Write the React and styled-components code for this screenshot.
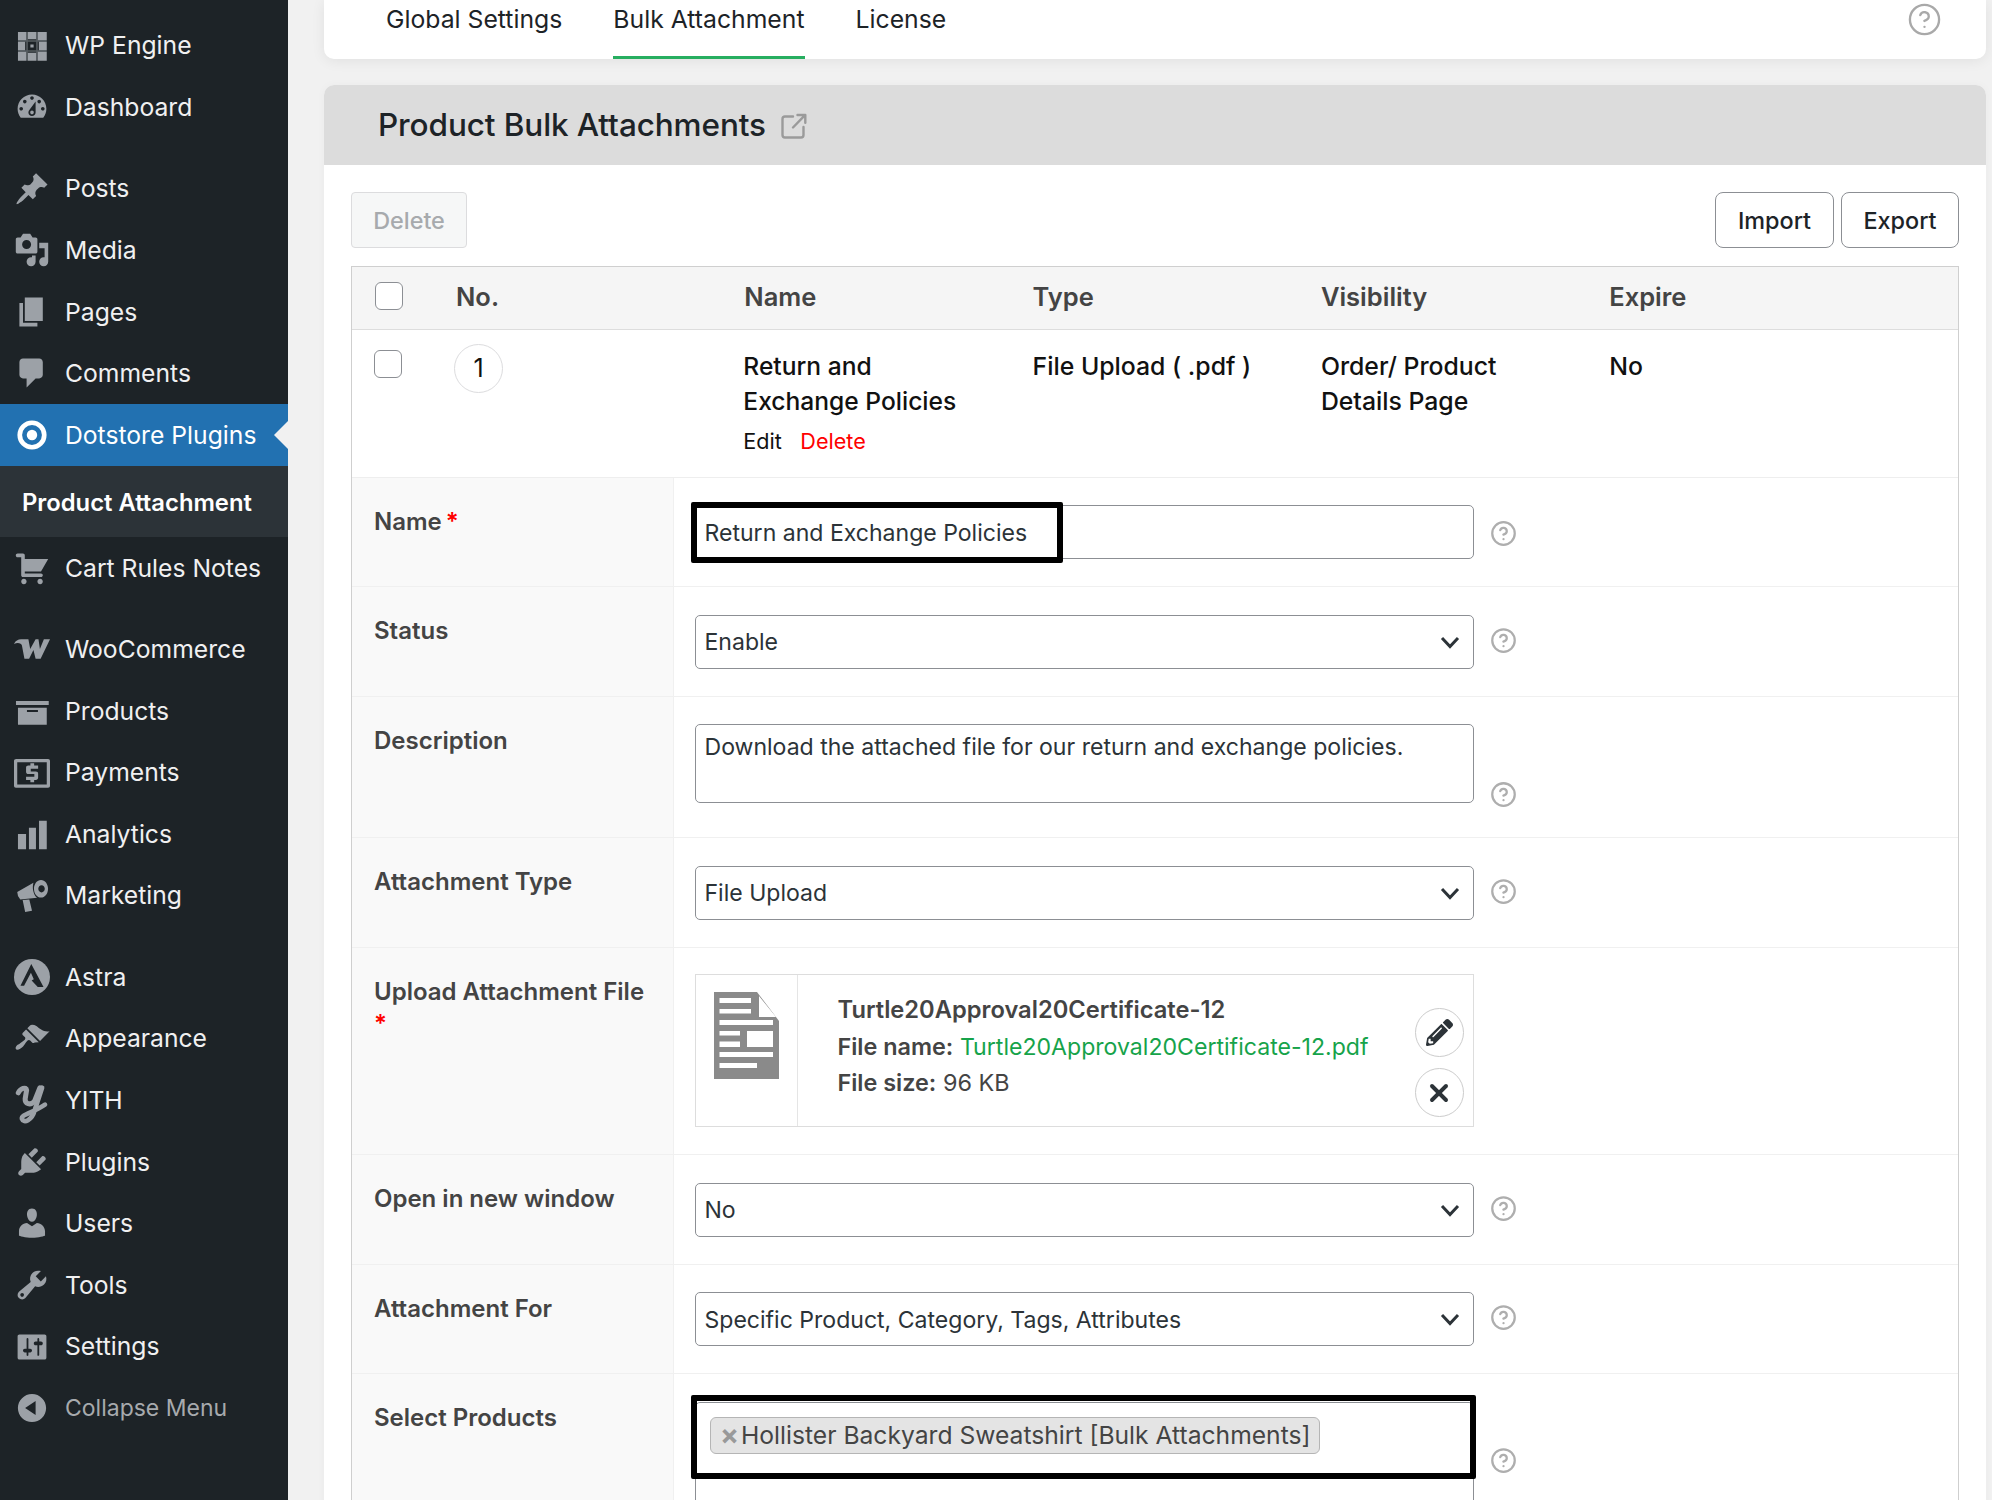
import React from 'react';
import styled, { createGlobalStyle } from 'styled-components';
import { CircleHelp, X } from 'lucide-react';
import { FaPencilAlt } from 'react-icons/fa';

const Global = createGlobalStyle`
  html, body { margin: 0; padding: 0; height: 1500px; overflow: hidden; background: #f1f1f1; }
  body { font-family: Inter, "Liberation Sans", sans-serif; color: #2c3338; }
  * { box-sizing: border-box; }
`;

const Shell = styled.div`display: flex; height: 1500px; overflow: hidden;`;
const Sidebar = styled.nav`width: 288px; flex: none; background: #1d2327; padding-top: 15px;`;
const MenuItem = styled.div`
  position: relative; height: 61.6px; display: flex; align-items: center; padding-left: 14px; gap: 15px;
  margin-bottom: ${p => (p.$gap ? '19.7px' : '0')};
  background: ${p => (p.$active ? '#2271b1' : 'transparent')};
  color: ${p => (p.$muted ? '#a7aaad' : '#f0f0f1')};
  font-size: ${p => (p.$muted ? '23px' : '24.7px')}; line-height: 1;
  ${p => p.$active && `color: #fff;`}
  svg { flex: none; overflow: visible; }
`;
const ActiveArrow = styled.span`
  position: absolute; right: 0; top: 17px; width: 0; height: 0;
  border-top: 14px solid transparent; border-bottom: 14px solid transparent; border-right: 14px solid #f1f1f1;
`;
const SubItem = styled.div`
  height: 71.5px; background: #2c3338; color: #fff; font-weight: 600; font-size: 23.8px;
  display: flex; align-items: center; padding: 2px 0 0 22px;
`;

const Main = styled.main`flex: 1; min-width: 0; padding: 0 6px 0 36px;`;
const TabPanel = styled.div`
  height: 59px; background: #fff; border-radius: 0 0 10px 10px; box-shadow: 0 2px 14px rgba(0,0,0,.07);
  display: flex; justify-content: space-between; padding: 0 44px 0 62px; margin-bottom: 26px;
`;
const Tabs = styled.div`display: flex; gap: 51px;`;
const Tab = styled.div`
  height: 59px; font-size: 24.75px; line-height: 38px; color: #1d2327;
  border-bottom: 3px solid ${p => (p.$active ? '#27ae60' : 'transparent')};
`;
const TopHelp = styled.div`padding-top: 2px; color: #a9a9a9; line-height: 0;`;
const Card = styled.section`background: #fff; border-radius: 10px 10px 0 0; box-shadow: 0 0 10px rgba(0,0,0,.03);`;
const CardHead = styled.header`
  height: 80px; background: #dcdcdc; border-radius: 10px 10px 0 0; display: flex; align-items: center;
  padding: 0 0 1.5px 54px; gap: 15px; color: #1d2327;
`;
const Title = styled.h1`margin: 0; font-size: 31.5px; font-weight: 500; letter-spacing: -.1px;`;
const HeadLink = styled.svg`width: 26px; height: 26px; margin-top: 3px; flex: none;`;
const CardBody = styled.div`padding: 27px 27px 0;`;
const Actions = styled.div`display: flex; justify-content: space-between; margin-bottom: 18px;`;
const ButtonGroup = styled.div`display: flex; gap: 7px;`;
const Btn = styled.button`
  height: 56px; padding: 0; width: ${p => p.$w}px; font: 500 23.4px Inter, sans-serif;
  border-radius: ${p => (p.$disabled ? '4px' : '8px')};
  color: ${p => (p.$disabled ? '#a7aaad' : '#1d2327')};
  background: ${p => (p.$disabled ? '#f6f7f7' : '#fff')};
  border: 1.5px solid ${p => (p.$disabled ? '#dcdcde' : '#8c8f94')};
`;
const Table = styled.div`border: 1.5px solid #cfcfcf; border-bottom: 0; width: 1608px;`;
const HeadRow = styled.div`
  display: grid; grid-template-columns: 104px repeat(5, 288.3px); height: 63px; padding-bottom: 4px; align-items: center;
  background: #f5f5f5; border-bottom: 1.5px solid #ddd; font-weight: 600; font-size: 25.5px; color: #444;
`;
const DataRow = styled.div`
  display: grid; grid-template-columns: 104px repeat(5, 288.3px); height: 147.5px; padding-top: 19px;
  border-bottom: 1.5px solid #eee; align-items: start; font-size: 24.8px; line-height: 35px; color: #111; font-weight: 500;
`;
const CheckCell = styled.div`padding-left: ${p => p.$pad}px;`;
const Check = styled.span`
  display: block; width: 28px; height: 28px; border: 1.5px solid #8c8f94; border-radius: 6px; background: #fff;
  margin-top: ${p => p.$top || 0}px;
`;
const NumberBadge = styled.div`
  width: 49px; height: 49px; border-radius: 50%; border: 1.5px solid #dcdcde; display: flex; align-items: center;
  justify-content: center; margin: -5px 0 0 -2px; font-weight: 400; font-size: 25px; color: #111;
`;
const NameCell = styled.div`margin-left: -1px; font-size: 24.6px;`;
const RowActions = styled.div`display: flex; gap: 18.5px; margin-top: 6px; font-size: 21.6px; font-weight: 400; line-height: 32px;`;
const Danger = styled.span`color: #f00;`;

const FormRow = styled.div`display: grid; grid-template-columns: 321.5px 1fr; border-bottom: 1.5px solid #f0f0f0;`;
const LabelCell = styled.div`
  background: #f9f9f9; border-right: 1.5px solid #f0f0f0; padding: 27px 22px; font-weight: 600; font-size: 24px;
  line-height: 33px; color: #444;
`;
const Req = styled.span`color: #f00; display: ${p => (p.$block ? 'block' : 'inline')}; margin-left: ${p => (p.$block ? 0 : '4px')}; line-height: ${p => (p.$block ? '32px' : 'inherit')};`;
const FieldCell = styled.div`display: flex; padding: 27.5px 0 ${p => p.$pb || 27}px 21px; gap: 16px;`;
const Field = styled.div`
  position: relative; width: 779px; height: ${p => p.$h || 54}px; flex: none; background: #fff;
  border: 1.5px solid #8c8f94; border-radius: 5px; padding: ${p => (p.$multi ? '5px 9px' : '1px 9px 0')};
  display: flex; align-items: ${p => (p.$multi ? 'flex-start' : 'center')}; justify-content: space-between;
  font-size: 23.05px; line-height: 34px; color: #2c3338;
`;
const Highlight = styled.span`
  position: absolute; left: ${p => p.$l}px; top: ${p => p.$t}px; width: ${p => p.$w}px; height: ${p => p.$h}px;
  border: 6px solid #000; border-radius: 2px; pointer-events: none;
`;
const HelpMark = styled.span`
  color: #aeaeae; line-height: 0; align-self: ${p => p.$align || 'center'};
  margin-top: ${p => p.$mt || 0}px; margin-bottom: ${p => p.$mb || 0}px;
`;
const Chevron = styled.svg`width: 20px; height: 13px; margin-right: 4px; flex: none;`;
const Upload = styled.div`
  width: 779px; height: 153px; margin-top: -1px; border: 1.5px solid #ddd; display: grid; grid-template-columns: 102px 1fr 58px; flex: none;
`;
const ThumbCell = styled.div`border-right: 1.5px solid #e5e5e5; padding: 17px 0 0 18px;`;
const FileInfo = styled.div`padding: 17px 0 0 40px; font-size: 23.4px; line-height: 36.5px; color: #444;`;
const FileTitle = styled.div`font-weight: 600; font-size: 23.7px;`;
const FileLine = styled.div`strong { font-weight: 600; }`;
const FileLink = styled.span`color: #16a34a; font-size: 23.1px;`;
const FileBtns = styled.div`display: flex; flex-direction: column; gap: 11px; padding-top: 33px; align-items: flex-start;`;
const RoundBtn = styled.div`
  width: 49px; height: 49px; border-radius: 50%; border: 1.5px solid #ccc; background: #fff; color: #2c3338;
  display: flex; align-items: center; justify-content: center;
`;
const Tag = styled.div`
  display: flex; align-items: center; height: 37px; width: 610px; margin: 9px 0 0 5.5px; padding-left: 9px; gap: 2px;
  background: #e4e4e4; border: 1.5px solid #b5b5b5; border-radius: 6px; font-size: 24.65px; color: #444; white-space: nowrap;
`;
const TagX = styled.span`font-weight: 700; color: #999; font-size: 28px; line-height: 1;`;

const Ico = ({ children, fill = '#9ca1a7' }) => (
  <svg width="36" height="36" viewBox="0 0 20 20" fill={fill} aria-hidden="true">{children}</svg>
);

const icons = {
  engine: (
    <Ico>
      <path d="M2.2 2.2h4.6v4.6H2.2zM7.7 2.2h4.6v4H7.7zM13.2 2.2h5v4.6h-5zM2.2 7.7h4v4.6h-4zM13.8 7.7h4.4v4.6h-4.4zM2.2 13.2h4.6v5H2.2zM7.7 13.8h4.6v4.4H7.7zM13.2 13.2h5v5h-5zM9.1 9.1h1.8v1.8H9.1z" />
      <path d="M6.8 2.2h.9v16h-.9zM12.3 2.2h.9v16h-.9zM2.2 6.8h16v.9h-16zM2.2 12.3h16v.9h-16z" opacity=".45" />
    </Ico>
  ),
  dashboard: <Ico><path d="M3.76 16h12.48c1.1-1.37 1.76-3.11 1.76-5 0-4.42-3.58-8-8-8s-8 3.58-8 8c0 1.89.66 3.63 1.76 5zM10 4c.55 0 1 .45 1 1s-.45 1-1 1-1-.45-1-1 .45-1 1-1zM6 6c.55 0 1 .45 1 1s-.45 1-1 1-1-.45-1-1 .45-1 1-1zm8 0c.55 0 1 .45 1 1s-.45 1-1 1-1-.45-1-1 .45-1 1-1zm-5.37 5.55L12 7v6c0 1.1-.9 2-2 2s-2-.9-2-2c0-.57.24-1.08.63-1.45zM4 10c.55 0 1 .45 1 1s-.45 1-1 1-1-.45-1-1 .45-1 1-1zm12 0c.55 0 1 .45 1 1s-.45 1-1 1-1-.45-1-1 .45-1 1-1zm-5 3c0-.55-.45-1-1-1s-1 .45-1 1 .45 1 1 1 1-.45 1-1z" fillRule="evenodd" /></Ico>,
  posts: <Ico><path d="M10.44 3.02l1.82-1.82 6.36 6.35-1.83 1.82c-1.05-.68-2.48-.57-3.41.36l-.75.75c-.92.93-1.04 2.35-.35 3.41l-1.83 1.82-2.41-2.41-2.8 2.79c-.42.42-3.38 2.71-3.8 2.29s1.86-3.39 2.28-3.81l2.79-2.79L4.1 9.36l1.83-1.82c1.05.69 2.48.57 3.4-.36l.75-.75c.93-.92 1.05-2.35.36-3.41z" /></Ico>,
  media: <Ico><path d="M13 11V4c0-.55-.45-1-1-1h-1.67L9 1H5L3.67 3H2c-.55 0-1 .45-1 1v7c0 .55.45 1 1 1h10c.55 0 1-.45 1-1zM7 4.5c1.38 0 2.5 1.12 2.5 2.5S8.38 9.5 7 9.5 4.5 8.38 4.5 7 5.62 4.5 7 4.5zM14 6h5v10.5c0 1.38-1.12 2.5-2.5 2.5S14 17.88 14 16.5s1.12-2.5 2.5-2.5c.17 0 .34.02.5.05V9h-3V6zm-4 8.05V13h2v3.5c0 1.38-1.12 2.5-2.5 2.5S7 17.88 7 16.5 8.12 14 9.5 14c.17 0 .34.02.5.05z" /></Ico>,
  pages: <Ico><path d="M6 15V2h10v13H6zm-1 1h8v2H3V5h2v11z" /></Ico>,
  comments: <Ico><path d="M5 2h9c1.1 0 2 .9 2 2v7c0 1.1-.9 2-2 2h-2l-5 5v-5H5c-1.1 0-2-.9-2-2V4c0-1.1.9-2 2-2z" /></Ico>,
  dotstore: (
    <Ico fill="#fff">
      <circle cx="10" cy="10" r="6.8" fill="none" stroke="#fff" strokeWidth="2.6" />
      <circle cx="10" cy="10" r="2.9" />
    </Ico>
  ),
  cart: <Ico><path d="M6 13h9c.55 0 1 .45 1 1s-.45 1-1 1H5c-.55 0-1-.45-1-1V4H2c-.55 0-1-.45-1-1s.45-1 1-1h3c.55 0 1 .45 1 1v2h13l-4 7H6v1zm-.5 3c.83 0 1.5.67 1.5 1.5S6.33 19 5.5 19 4 18.33 4 17.5 4.67 16 5.5 16zm9 0c.83 0 1.5.67 1.5 1.5s-.67 1.5-1.5 1.5-1.5-.67-1.5-1.5.67-1.5 1.5-1.5z" /></Ico>,
  woo: <Ico><path d="M0 7.2C.8 5.4 2.2 4.6 4 4.6h4l1 5.4 3-5.4h1.600l.8 5.400 2.200-5.400H20l-5.200 10.800H12l-1.200-4.800-2.400 4.800H5.800L4.400 8C4.200 6.800 2 6.200 0 7.200z" /></Ico>,
  products: <Ico><path d="M1.1 4.4h18.2v2.3H1.1zM2.2 8.2h16v9.4h-16zM7.2 9.4v1.1h6.1V9.4z" fillRule="evenodd" /></Ico>,
  payments: (
    <Ico>
      <path d="M1.3 2.2h17.6c.7 0 1.1.4 1.1 1.1v13.8c0 .7-.4 1.1-1.1 1.1H1.1C.4 18.2 0 17.8 0 17.1V3.3c0-.7.4-1.1 1.3-1.1zM1.8 4v12.4h16.4V4z" fillRule="evenodd" />
      <path d="M13.4 7.6H9.3v1.5h2.8c.9 0 1.3.5 1.3 1.2v2.4c0 .7-.5 1.2-1.3 1.2h-.9v1.2H9.1v-1.2H6.7v-1.8h4.6v-1.5H8c-.8 0-1.3-.5-1.3-1.2V7c0-.7.5-1.2 1.3-1.2h1.1V4.6h2.1v1.2h2.2z" />
    </Ico>
  ),
  analytics: <Ico><path d="M2.2 10h4.5v8.5H2.2zM8.3 6.5h3.9v12H8.3zM13.9 2.6h4.3v15.9h-4.3z" /></Ico>,
  marketing: (
    <Ico>
      <path d="M1.8 7.8 L10.8 2.6 C10 5.4 10.6 9 12.8 11 L3.5 12 Q1.8 10.2 1.8 7.8Z M4.8 12.2 L8.5 11.9 L10 18.2 L6.2 18.9Z" />
      <path d="M15 1.1c2.2 0 3.9 2.2 3.9 4.9s-1.7 4.9-3.9 4.9-3.9-2.2-3.9-4.9 1.7-4.9 3.9-4.9zm.3 2.9c-1 0-1.8.9-1.8 2s.8 2 1.8 2 1.8-.9 1.8-2-.8-2-1.8-2z" fillRule="evenodd" />
    </Ico>
  ),
  astra: (
    <Ico>
      <circle cx="10" cy="10" r="10" />
      <path d="M3.6 14.8 L9.6 2.8 L16.4 15.6 L13.2 15.6 L9.8 12 L11 11.2 L9.4 7.6 L5.6 14.8Z" fill="#1d2327" />
    </Ico>
  ),
  appearance: <Ico><path d="M14.48 11.06L7.41 3.99l1.5-1.5c.5-.56 2.3-.47 3.51.32 1.21.8 1.43 1.28 2.91 2.1 1.18.64 2.45 1.26 4.45.85zm-.71.71L6.7 4.7 4.93 6.47c-.39.39-.39 1.02 0 1.41l1.06 1.06c.39.39.39 1.03 0 1.42-.6.6-1.43 1.11-2.21 1.69-.35.26-.7.53-1.01.84C1.43 13.23.4 14.91 1.2 15.7c.79.8 2.48-.23 3.83-1.58.31-.31.58-.66.85-1.02.57-.78 1.08-1.61 1.69-2.21.39-.39 1.02-.39 1.41 0l1.06 1.06c.39.39 1.02.39 1.41 0z" /></Ico>,
  yith: (
    <Ico fill="none">
      <path d="M2.4 6C3.5 3.6 6.8 2.4 7 4.6L6.2 9.4C6 12 9 13.4 11.4 10.6L14.4 3.2" stroke="#9ca1a7" strokeWidth="2.8" strokeLinecap="round" />
      <path d="M15.6 3.2L11.4 16C10 21 5.4 23.4 4.4 20.4C4 18 11 17 17.2 12.6" stroke="#9ca1a7" strokeWidth="2.6" strokeLinecap="round" />
    </Ico>
  ),
  plugins: <Ico><path d="M13.11 4.36L9.87 7.6 8 5.73l3.24-3.24c.35-.34 1.05-.2 1.56.32.52.51.66 1.21.31 1.55zm-8 1.77l.91-1.12 9.01 9.01-1.19.84c-.71.71-2.63 1.16-3.82 1.16H6.14L4.9 17.26c-.59.59-1.54.59-2.12 0-.59-.58-.59-1.53 0-2.12l1.24-1.24v-3.88c0-1.13.4-3.19 1.09-3.89zm7.26 3.97l3.24-3.24c.34-.35 1.04-.21 1.55.31.52.51.66 1.21.31 1.55l-3.24 3.25z" /></Ico>,
  users: <Ico><path d="M10 9.25c-2.27 0-2.73-3.44-2.73-3.44C7 4.02 7.82 2 9.97 2c2.16 0 2.98 2.02 2.71 3.81 0 0-.41 3.44-2.68 3.44zm0 2.57L12.72 10c2.39 0 4.52 2.33 4.52 4.53v2.49s-3.65 1.13-7.24 1.13c-3.65 0-7.24-1.13-7.24-1.13v-2.49c0-2.25 1.94-4.48 4.47-4.48z" /></Ico>,
  tools: <Ico><path d="M16.68 9.77c-1.34 1.34-3.3 1.67-4.95.99l-5.41 6.52c-.99.99-2.59.99-3.58 0s-.99-2.59 0-3.57l6.52-5.42c-.68-1.65-.35-3.61.99-4.95 1.28-1.28 3.12-1.62 4.72-1.06l-2.89 2.89 2.82 2.82 2.86-2.87c.53 1.58.18 3.39-1.08 4.65zM3.81 16.21c.4.39 1.04.39 1.43 0 .4-.4.4-1.04 0-1.43-.39-.4-1.03-.4-1.43 0-.39.39-.39 1.03 0 1.43z" /></Ico>,
  settings: <Ico><path d="M18 16V4c0-.55-.45-1-1-1H3c-.55 0-1 .45-1 1v12c0 .55.45 1 1 1h14c.55 0 1-.45 1-1zM8 11h1c.55 0 1 .45 1 1s-.45 1-1 1H8v1.5c0 .28-.22.5-.5.5s-.5-.22-.5-.5V13H6c-.55 0-1-.45-1-1s.45-1 1-1h1V5.5c0-.28.22-.5.5-.5s.5.22.5.5V11zm5-2h-1c-.55 0-1-.45-1-1s.45-1 1-1h1V5.5c0-.28.22-.5.5-.5s.5.22.5.5V7h1c.55 0 1 .45 1 1s-.45 1-1 1h-1v5.5c0 .28-.22.5-.5.5s-.5-.22-.5-.5V9z" /></Ico>,
  collapse: <Ico><path d="M10 2.16c4.33 0 7.84 3.51 7.84 7.84s-3.51 7.84-7.84 7.84S2.16 14.33 2.16 10 5.71 2.16 10 2.16zm2 11.72V6.12L6.18 9.97z" /></Ico>,
};

const topMenu = [
  ['engine', 'WP Engine'], ['dashboard', 'Dashboard', true],
  ['posts', 'Posts'], ['media', 'Media'], ['pages', 'Pages'], ['comments', 'Comments'],
];
const lowerMenu = [
  ['cart', 'Cart Rules Notes', true],
  ['woo', 'WooCommerce'], ['products', 'Products'], ['payments', 'Payments'], ['analytics', 'Analytics'], ['marketing', 'Marketing', true],
  ['astra', 'Astra'], ['appearance', 'Appearance'], ['yith', 'YITH'], ['plugins', 'Plugins'], ['users', 'Users'], ['tools', 'Tools'], ['settings', 'Settings'],
];

const Help = (props) => (
  <HelpMark {...props}><CircleHelp size={27} strokeWidth={2} /></HelpMark>
);
const ChevronDown = () => (
  <Chevron viewBox="0 0 20 13" fill="none"><path d="M2 2l8 8.5L18 2" stroke="#2c3338" strokeWidth="3" /></Chevron>
);
const SelectField = ({ value }) => (
  <FieldCell><Field>{value}<ChevronDown /></Field><Help $mb={3} /></FieldCell>
);

const PdfThumb = () => (
  <svg width="65" height="87" viewBox="0 0 65 87" aria-hidden="true">
    <path d="M0 0h43l22 29v58H0z" fill="#8a8a8a" />
    <path d="M45 4l17 21H45zM5.5 6H37v5H5.5zM5.5 17H37v4.5H5.5zM5.5 28H59v5H5.5zM5.5 39H26v4.5H5.5zM33 39h26v16H33zM5.5 49.5H26V55H5.5zM5.5 60H59v5H5.5zM5.5 71H43v5H5.5z" fill="#fff" />
  </svg>
);

export default function App() {
  return (
    <Shell>
      <Global />
      <Sidebar>
        {topMenu.map(([k, label, gap]) => (
          <MenuItem key={k} $gap={gap}>{icons[k]}<span>{label}</span></MenuItem>
        ))}
        <MenuItem $active>{icons.dotstore}<span>Dotstore Plugins</span><ActiveArrow /></MenuItem>
        <SubItem>Product Attachment</SubItem>
        {lowerMenu.map(([k, label, gap]) => (
          <MenuItem key={k} $gap={gap}>{icons[k]}<span>{label}</span></MenuItem>
        ))}
        <MenuItem $muted>{icons.collapse}<span>Collapse Menu</span></MenuItem>
      </Sidebar>
      <Main>
        <TabPanel>
          <Tabs>
            <Tab>Global Settings</Tab>
            <Tab $active>Bulk Attachment</Tab>
            <Tab>License</Tab>
          </Tabs>
          <TopHelp><CircleHelp size={35} strokeWidth={1.6} /></TopHelp>
        </TabPanel>
        <Card>
          <CardHead>
            <Title>Product Bulk Attachments</Title>
            <HeadLink viewBox="0 0 26 26" fill="none" stroke="#9a9a9a" strokeWidth="2.4" strokeLinecap="round" strokeLinejoin="round" aria-hidden="true">
              <path d="M12 3.5H4a2.5 2.5 0 0 0-2.5 2.5v16A2.5 2.5 0 0 0 4 24.5h16a2.5 2.5 0 0 0 2.5-2.5v-8" />
              <path d="M12 14.5L24 2.2M16.5 2h7.8v7.8" />
            </HeadLink>
          </CardHead>
          <CardBody>
            <Actions>
              <Btn $disabled $w={116}>Delete</Btn>
              <ButtonGroup>
                <Btn $w={119}>Import</Btn>
                <Btn $w={118}>Export</Btn>
              </ButtonGroup>
            </Actions>
            <Table>
              <HeadRow>
                <CheckCell $pad={23}><Check /></CheckCell>
                <div>No.</div><div>Name</div><div>Type</div><div>Visibility</div><div>Expire</div>
              </HeadRow>
              <DataRow>
                <CheckCell $pad={22}><Check $top={1} /></CheckCell>
                <NumberBadge>1</NumberBadge>
                <NameCell>
                  Return and<br />Exchange Policies
                  <RowActions><span>Edit</span><Danger>Delete</Danger></RowActions>
                </NameCell>
                <div>File Upload ( .pdf )</div>
                <div>Order/ Product<br />Details Page</div>
                <div>No</div>
              </DataRow>
              <FormRow>
                <LabelCell>Name<Req>*</Req></LabelCell>
                <FieldCell>
                  <Field>Return and Exchange Policies<Highlight $l={-5} $t={-4} $w={372} $h={61} /></Field>
                  <Help $mt={2} />
                </FieldCell>
              </FormRow>
              <FormRow>
                <LabelCell>Status</LabelCell>
                <SelectField value="Enable" />
              </FormRow>
              <FormRow>
                <LabelCell>Description</LabelCell>
                <FieldCell $pb={34}>
                  <Field $multi $h={79}>Download the attached file for our return and exchange policies.</Field>
                  <Help $align="flex-end" $mb={-5} />
                </FieldCell>
              </FormRow>
              <FormRow>
                <LabelCell>Attachment Type</LabelCell>
                <SelectField value="File Upload" />
              </FormRow>
              <FormRow>
                <LabelCell>Upload Attachment File<Req $block>*</Req></LabelCell>
                <FieldCell>
                  <Upload>
                    <ThumbCell><PdfThumb /></ThumbCell>
                    <FileInfo>
                      <FileTitle>Turtle20Approval20Certificate-12</FileTitle>
                      <FileLine><strong>File name:</strong> <FileLink>Turtle20Approval20Certificate-12.pdf</FileLink></FileLine>
                      <FileLine><strong>File size:</strong> 96 KB</FileLine>
                    </FileInfo>
                    <FileBtns>
                      <RoundBtn><FaPencilAlt size={27} /></RoundBtn>
                      <RoundBtn><X size={28} strokeWidth={3.4} /></RoundBtn>
                    </FileBtns>
                  </Upload>
                </FieldCell>
              </FormRow>
              <FormRow>
                <LabelCell>Open in new window</LabelCell>
                <SelectField value="No" />
              </FormRow>
              <FormRow>
                <LabelCell>Attachment For</LabelCell>
                <SelectField value="Specific Product, Category, Tags, Attributes" />
              </FormRow>
              <FormRow>
                <LabelCell>Select Products</LabelCell>
                <FieldCell>
                  <Field $multi $h={200}>
                    <Tag><TagX>×</TagX>Hollister Backyard Sweatshirt [Bulk Attachments]</Tag>
                    <Highlight $l={-4.5} $t={-8} $w={785} $h={84} />
                  </Field>
                  <Help $align="flex-start" $mt={45} />
                </FieldCell>
              </FormRow>
            </Table>
          </CardBody>
        </Card>
      </Main>
    </Shell>
  );
}
